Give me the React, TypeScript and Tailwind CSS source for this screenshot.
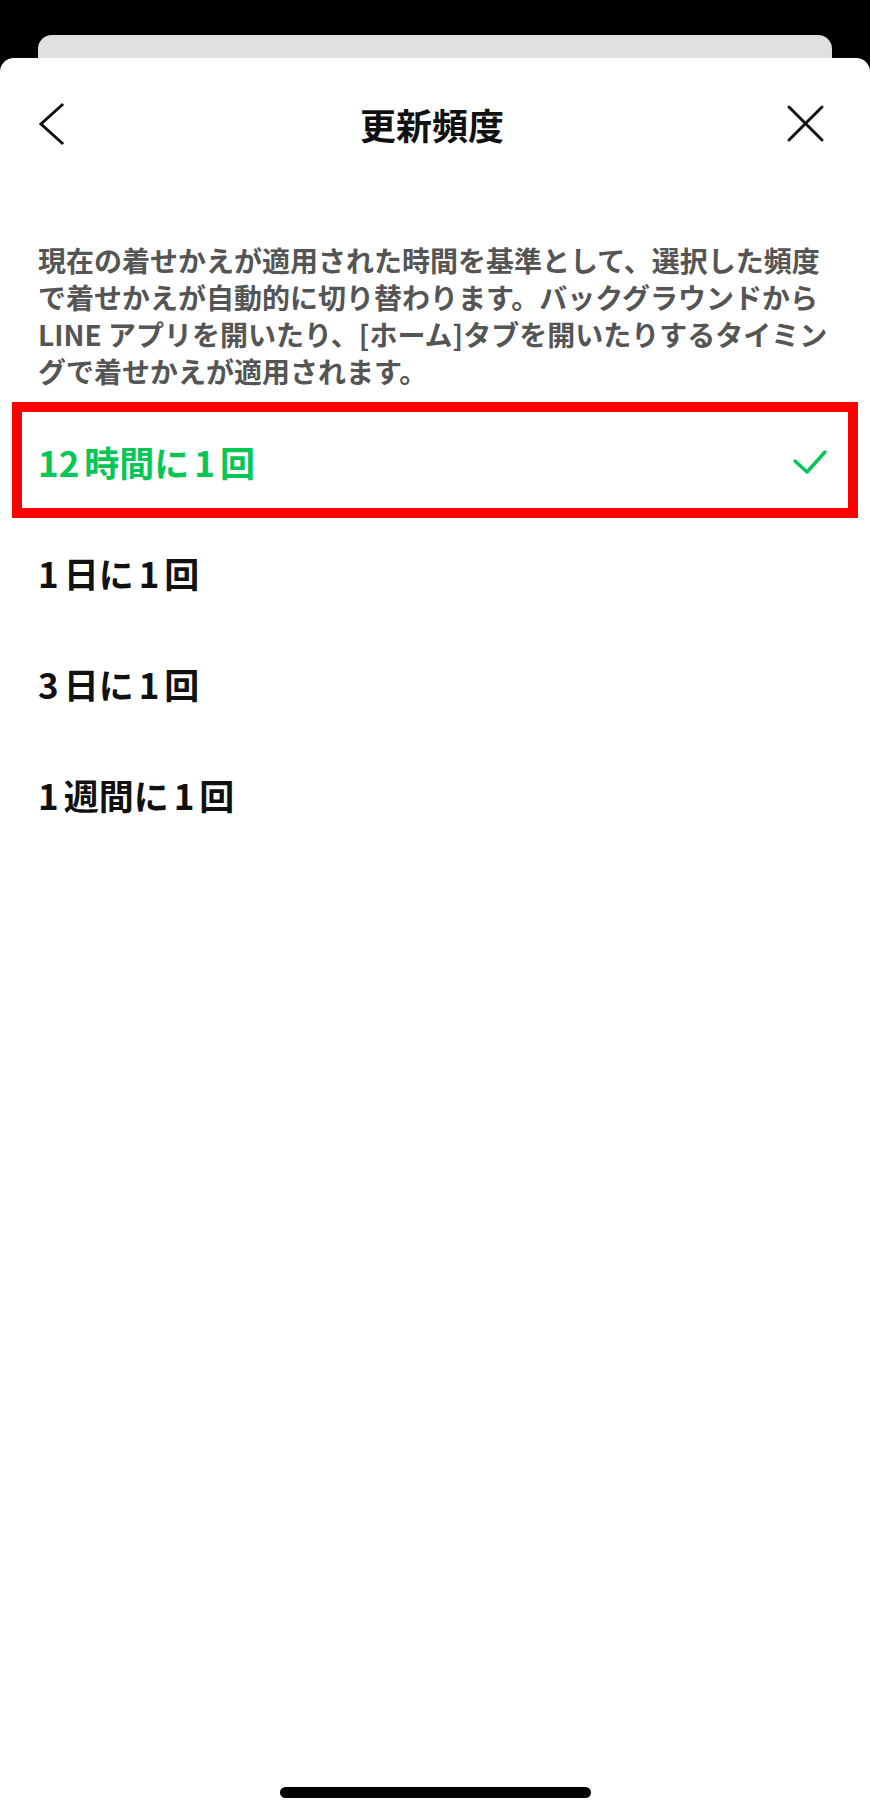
const FONT = '"Noto Sans CJK JP", "Noto Sans", sans-serif'

type Option = { label: string; selected?: boolean }

const options: Option[] = [
  { label: '12時間に1回', selected: true },
  { label: '1日に1回' },
  { label: '3日に1回' },
  { label: '1週間に1回' },
]

// iOS puts a little space between digits and kana/kanji, so give digit runs some margin
function Label({ text }: { text: string }) {
  const parts = text.split(/(\d+)/).filter((p) => p !== '')
  return (
    <>
      {parts.map((p, i) =>
        /\d/.test(p) ? (
          <span key={i} className={i === 0 ? 'mr-[5px]' : 'mx-[5px]'}>
            {p}
          </span>
        ) : (
          <span key={i}>{p}</span>
        )
      )}
    </>
  )
}

function BackIcon() {
  return (
    <svg width="30" height="44" viewBox="0 0 30 44" fill="none">
      <path d="M26 3 L5 22 L26 41" stroke="#111" strokeWidth="3" strokeLinecap="square" strokeLinejoin="miter" />
    </svg>
  )
}

function CloseIcon() {
  return (
    <svg width="44" height="44" viewBox="0 0 44 44" fill="none">
      <path d="M5 5 L38 38 M38 5 L5 38" stroke="#111" strokeWidth="3" strokeLinecap="round" />
    </svg>
  )
}

function CheckIcon() {
  return (
    <svg width="36" height="28" viewBox="0 0 36 28" fill="none">
      <path d="M3 13 L15 24 L33 4" stroke="#06c755" strokeWidth="3.5" strokeLinecap="round" strokeLinejoin="round" />
    </svg>
  )
}

export default function App() {
  return (
    <div className="min-h-[1817px] w-[870px] bg-black pt-[35px]" style={{ fontFamily: FONT }}>
      {/* stacked sheet behind */}
      <div className="mx-[38px] h-[23px] rounded-t-[14px] bg-[#e0e0e0]"></div>

      {/* Sheet */}
      <div className="flex h-[1759px] flex-col rounded-t-[14px] bg-white">
        {/* Header */}
        <div className="grid h-[132px] grid-cols-[1fr_auto_1fr] items-center pl-[36px] pr-[42px]">
          <div className="flex justify-start">
            <BackIcon />
          </div>
          <h1 className="text-[36px] font-bold leading-none text-[#111]">更新頻度</h1>
          <div className="flex justify-end">
            <CloseIcon />
          </div>
        </div>

        {/* Description */}
        <p className="mt-[52px] px-[38px] text-[28px] font-semibold leading-[37px] text-[#555]">
          現在の着せかえが適用された時間を基準として、選択した頻度
          <br />
          で着せかえが自動的に切り替わります。バックグラウンドから
          <br />
          LINE アプリを開いたり、[ホーム]タブを開いたりするタイミン
          <br />
          グで着せかえが適用されます。
        </p>

        {/* Options */}
        <ul className="mt-[16px]">
          {options.map((o) => (
            <li key={o.label} className="relative flex h-[111px] items-center justify-between pl-[38px] pr-[42px]">
              <span
                className={`text-[35px] font-bold leading-none ${o.selected ? 'text-[#06c755]' : 'text-[#111]'}`}
              >
                <Label text={o.label} />
              </span>
              {o.selected && <CheckIcon />}
              {o.selected && (
                <div className="pointer-events-none absolute top-[-4px] right-[12px] bottom-[-1px] left-[12px] border-[10px] border-[#ff0000]"></div>
              )}
            </li>
          ))}
        </ul>

        <div className="flex-1"></div>

        {/* Home indicator */}
        <div className="mx-auto mb-[19px] h-[11px] w-[311px] rounded-full bg-black"></div>
      </div>
    </div>
  )
}
